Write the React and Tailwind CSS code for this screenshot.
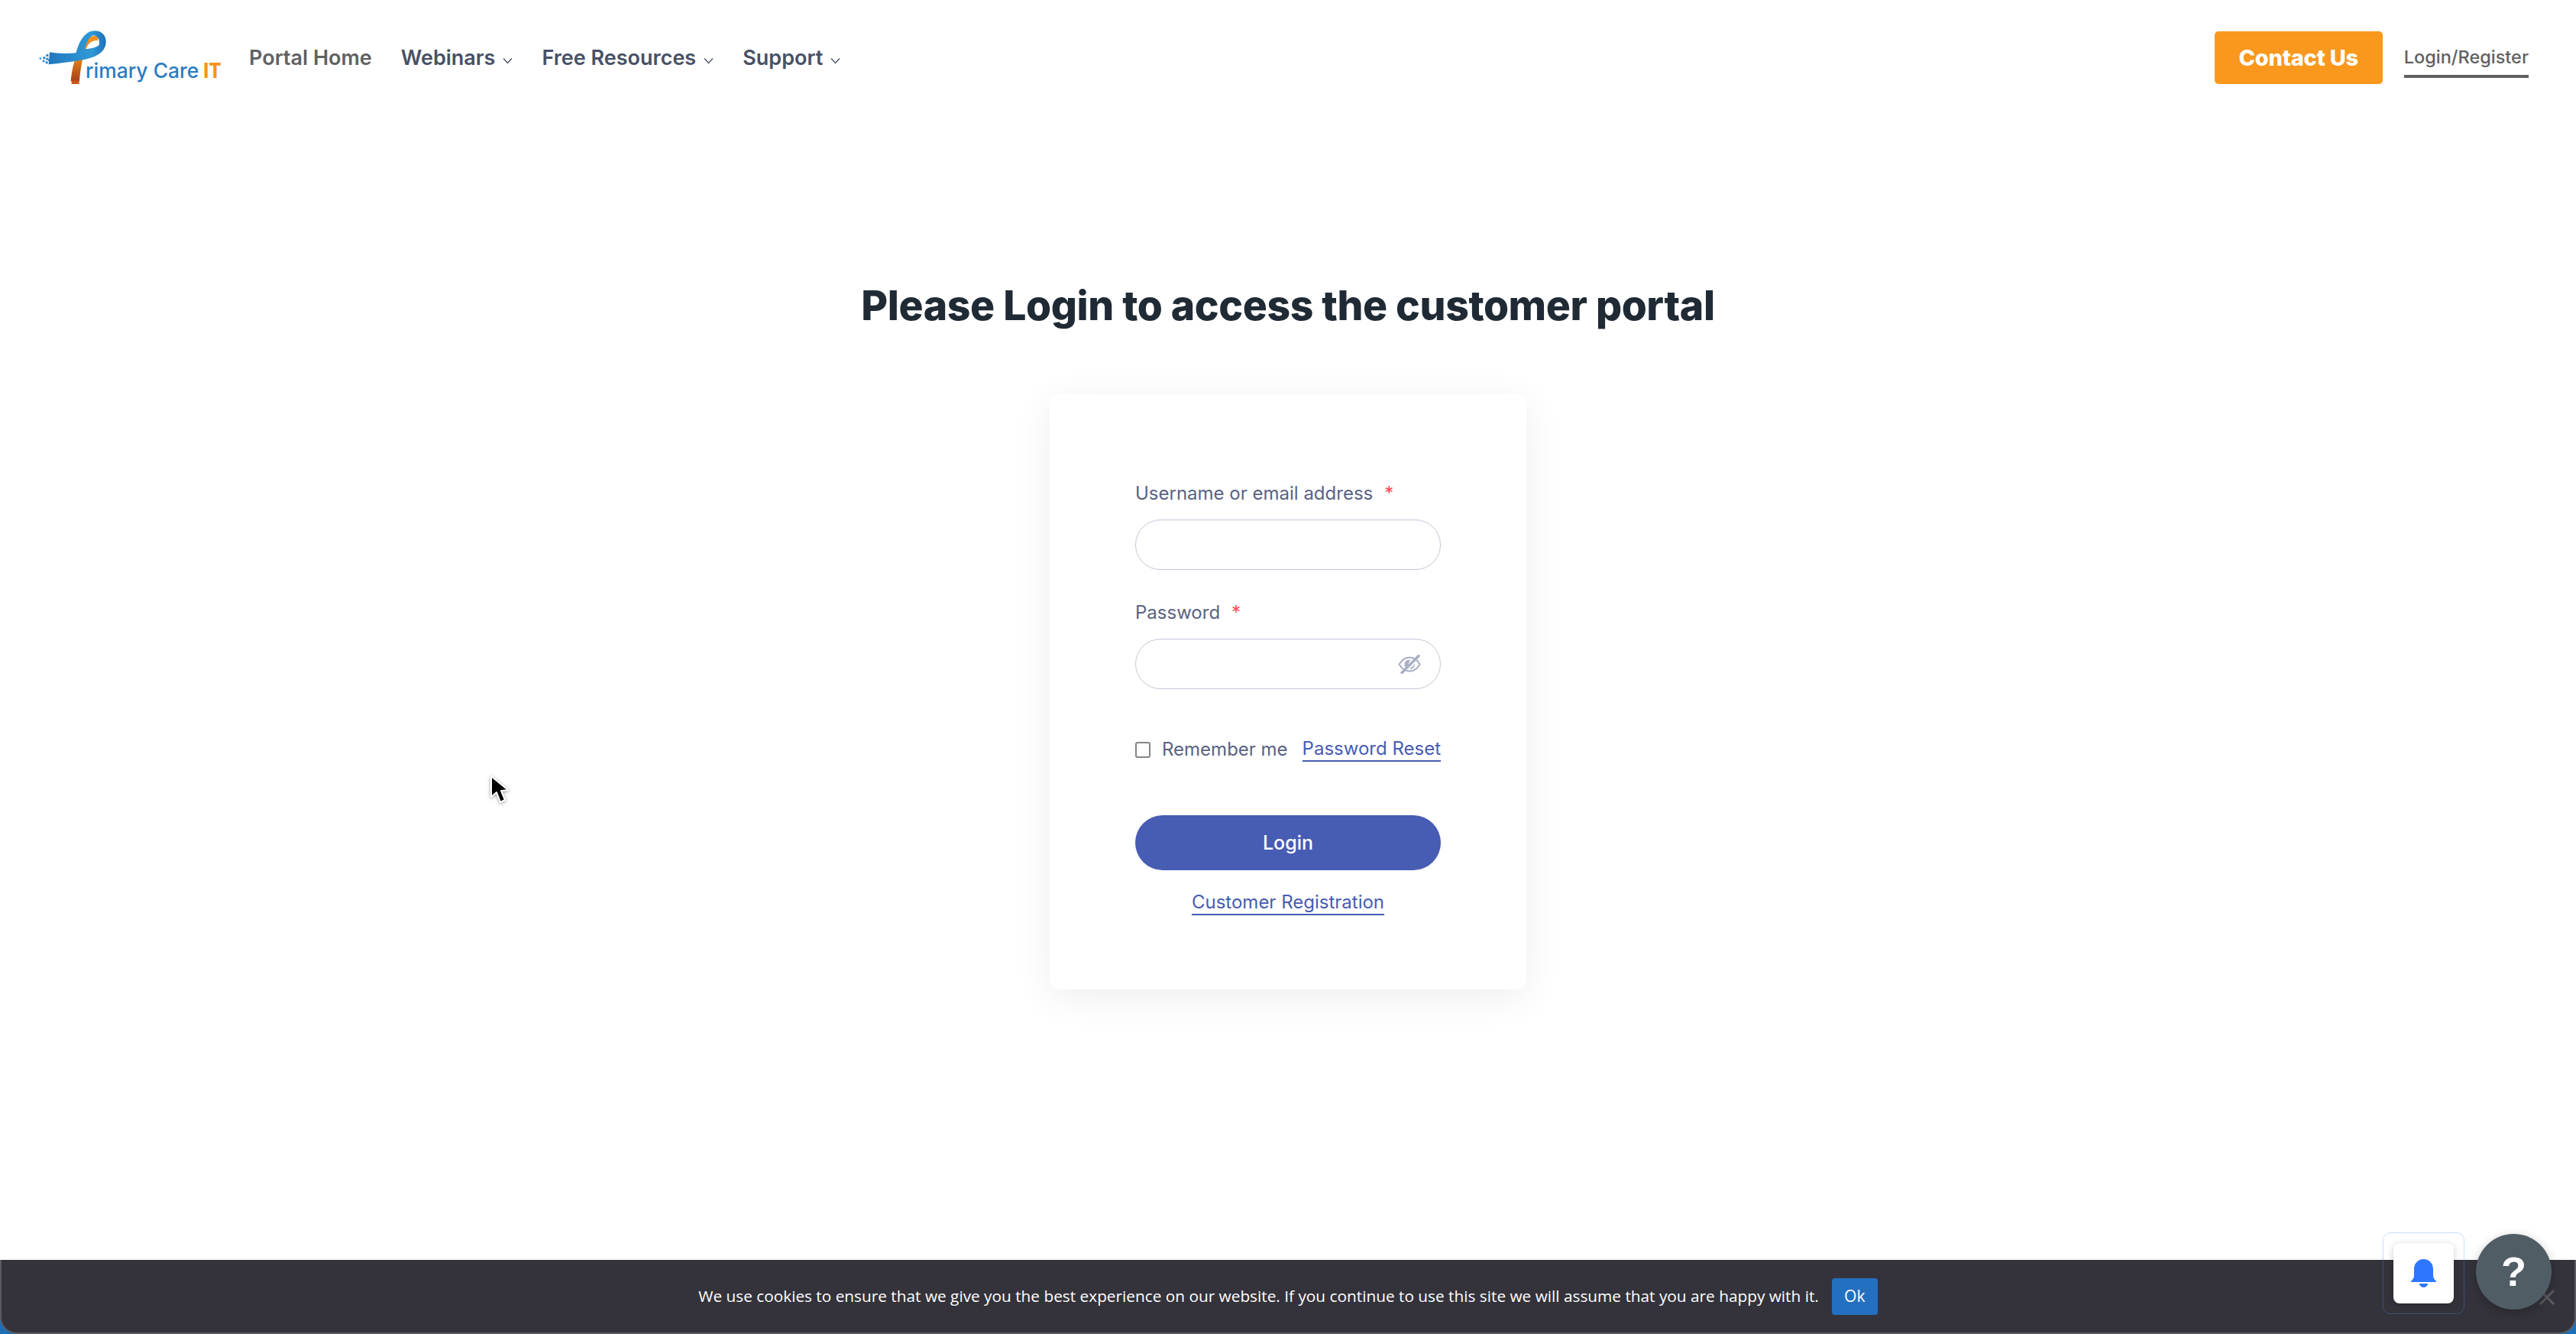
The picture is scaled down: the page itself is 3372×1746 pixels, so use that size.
const poppins = "font-['Inter','Liberation_Sans',sans-serif]";

function Logo() {
  return (
    <svg width="240" height="70" viewBox="62 65 720 210" className="shrink-0 overflow-visible">
      <defs>
        <linearGradient id="tail" x1="0" y1="0" x2="0" y2="1">
          <stop offset="0" stopColor="#f7941d" />
          <stop offset="0.55" stopColor="#dd7a1e" />
          <stop offset="1" stopColor="#a8401a" />
        </linearGradient>
        <linearGradient id="band" x1="0" y1="0" x2="1" y2="0">
          <stop offset="0" stopColor="#2277be" />
          <stop offset="0.75" stopColor="#2f9ad6" />
          <stop offset="1" stopColor="#1f6fb8" />
        </linearGradient>
      </defs>
      {/* ribbon tail */}
      <path d="M187 264 C190 215 205 160 232 118 C248 94 270 84 296 84 L292 104 C270 102 255 115 245 140 C232 175 224 220 221 264 Z" fill="url(#tail)" />
      <rect x="190" y="262" width="30" height="13" fill="#c8561a" />
      {/* loop and band */}
      <path d="M208 152 C220 105 245 66 280 66 C310 66 325 85 325 110 C325 140 300 168 235 180 C190 188 140 194 100 198 L104 150 C140 156 180 156 208 152 Z M242 138 C265 136 285 132 298 122 C302 105 294 88 280 84 C262 84 250 108 242 138 Z" fill="url(#band)" fillRule="evenodd" />
      {/* pixel dots */}
      <g fill="#2a86cb">
        <rect x="90" y="158" width="9" height="9" />
        <rect x="78" y="168" width="9" height="9" />
        <rect x="64" y="171" width="7" height="7" />
        <rect x="90" y="172" width="9" height="9" />
        <rect x="76" y="181" width="8" height="8" />
        <rect x="88" y="186" width="9" height="9" />
        <rect x="98" y="178" width="7" height="7" />
      </g>
      <text x="245" y="250" fontFamily="Inter, sans-serif" fontSize="80" fontWeight="500" textLength="445" lengthAdjust="spacingAndGlyphs" fill="#2a7cc2">rimary Care</text>
      <text x="708" y="250" fontFamily="Inter, sans-serif" fontSize="82" fontWeight="800" textLength="70" lengthAdjust="spacingAndGlyphs" fill="#f7941d">IT</text>
    </svg>
  );
}

function Caret() {
  return (
    <svg width="13" height="9" viewBox="0 0 13 9" fill="none" stroke="#475165" strokeWidth="1.3" className="mt-[6px] shrink-0">
      <path d="M1 1.5 L6.5 7.5 L12 1.5" />
    </svg>
  );
}

function NavItem({ label, caret }) {
  return (
    <a className={`flex items-center gap-[10px] pt-[2px] text-[27px] font-semibold ${caret ? "text-[#475165]" : "text-[#616161]"}`}>
      <span>{label}</span>
      {caret && <Caret />}
    </a>
  );
}

function SlashedEye() {
  return (
    <svg width="30" height="25" viewBox="0 0 30 25" fill="none" className="shrink-0">
      <path d="M1.500 12.500 C6 5.500 10.500 3.500 15 3.500 C20 3.500 25 6 28.500 12.500 C25 19 20 21.500 15 21.500 C10.500 21.500 6 19.500 1.500 12.500 Z" stroke="#a9aec4" strokeWidth="2" />
      <path d="M16 6.500 C11.500 6 8.500 9 8.500 12.500 C8.500 14.500 9.500 16.500 11 17.500 Z" fill="#a9aec4" />
      <path d="M21.500 12.500 C21 15 19 17.500 16 18" stroke="#a9aec4" strokeWidth="1.500" />
      <path d="M27 1.500 L5 23.500" stroke="#a9aec4" strokeWidth="3.500" strokeLinecap="round" />
    </svg>
  );
}

function Field({ label, eye, className }) {
  return (
    <div className={className}>
      <label className="flex h-[34px] items-center pt-[2px] text-[24px] text-[#5a6283]">
        {label}
        <span className="ml-[15px] text-[#ff4752]">*</span>
      </label>
      <div className="mt-[18px] flex h-[66px] items-center justify-end rounded-full border border-[#c3c6d8] pr-[25px]">
        {eye && <SlashedEye />}
      </div>
    </div>
  );
}

export default function App() {
  return (
    <div className={`relative flex h-[1746px] w-full flex-col overflow-hidden bg-white ${poppins}`}>
      {/* HEADER */}
      <header className="flex h-[150px] items-center justify-between pl-[51px] pr-[62px]">
        <div className="flex items-center">
          <Logo />
          <nav className="ml-[35px] flex items-center gap-[38px]">
            <NavItem label="Portal Home" />
            <NavItem label="Webinars" caret />
            <NavItem label="Free Resources" caret />
            <NavItem label="Support" caret />
          </nav>
        </div>
        <div className="flex items-center gap-[28px]">
          <a className="flex h-[69px] w-[220px] items-center justify-center rounded-[5px] bg-[#f9981d] pt-[2px] text-[29px] font-extrabold tracking-[-0.2px] text-white">
            Contact Us
          </a>
          <a className="mt-[9px] border-b-[4px] border-[#616161] pb-[5px] text-[23.5px] font-medium text-[#616161]">
            Login/Register
          </a>
        </div>
      </header>

      {/* MAIN */}
      <main className="flex flex-col items-center">
        <h1 className="mt-[214px] text-[53.5px] leading-[72px] font-extrabold tracking-[-0.4px] text-[#1f2a35]">
          Please Login to access the customer portal
        </h1>

        <form className="mt-[80px] flex h-[779px] w-[624px] flex-col rounded-[14px] bg-white px-[112px] pt-[112px] shadow-[0_10px_50px_rgba(0,0,0,0.07)]">
          <Field label="Username or email address" />
          <Field label="Password" eye className="mt-[38px]" />

          <div className="mt-[62px] flex h-[34px] items-center justify-between text-[24px]">
            <div className="flex items-center">
              <span className="h-[21px] w-[20px] rounded-[3px] border-2 border-[#858585]" />
              <span className="ml-[15px] text-[#5a6283]">Remember me</span>
            </div>
            <a className="border-b-2 border-[#475cb3] text-[#475cb3] leading-[30px]">Password Reset</a>
          </div>

          <button type="button" className="mt-[69px] h-[72px] rounded-full bg-[#475cb3] pt-[2px] text-[25px] font-medium text-white">
            Login
          </button>

          <a className="mt-[27px] self-center border-b-2 border-[#475cb3] text-[24px] leading-[30px] text-[#475cb3]">
            Customer Registration
          </a>
        </form>
      </main>

      {/* COOKIE BAR */}
      <div className="absolute inset-x-0 bottom-0 h-[97px] bg-[#1f6fb8]">
        <div className="flex h-full items-center justify-center gap-[17px] rounded-b-[22px] border-x-2 border-b-2 border-[#5b5a60] bg-[#34333b] font-['Open_Sans',sans-serif]">
          <p className="text-[20.8px] text-white">
            We use cookies to ensure that we give you the best experience on our website. If you continue to use this site we will assume that you are happy with it.
          </p>
          <button type="button" className="h-[48px] w-[60px] rounded-[4px] bg-[#2470c0] text-[21px] text-white">
            Ok
          </button>
        </div>
      </div>

      {/* close x under the help button */}
      <svg width="20" height="20" viewBox="0 0 20 20" className="absolute left-[3324px] top-[1688px]" stroke="#5b5b61" strokeWidth="3">
        <path d="M1 1 L19 19 M19 1 L1 19" />
      </svg>

      {/* notification bell */}
      <div className="absolute left-[3119px] top-[1613px] flex h-[107px] w-[107px] items-center justify-center rounded-[10px] border border-[#4d8dff]/30">
        <div className="flex h-[79px] w-[79px] items-center justify-center rounded-[8px] bg-white shadow-[0_2px_10px_rgba(0,0,0,0.2)]">
          <svg width="33" height="37" viewBox="0 0 33 37" fill="#2f76ff">
            <path d="M16.5 0 C24 0 29 6 29 13 L29 21 C29 25 31 27 33 29 L33 30 L0 30 L0 29 C2 27 4 25 4 21 L4 13 C4 6 9 0 16.5 0 Z" />
            <path d="M10.5 32 L22.5 32 C21.5 35 19 37 16.5 37 C14 37 11.500 35 10.500 32 Z" />
          </svg>
        </div>
      </div>

      {/* help button */}
      <div className="absolute left-[3241px] top-[1615px] flex h-[99px] w-[99px] items-center justify-center rounded-full bg-[#505d64] font-['Liberation_Sans',sans-serif] text-[54px] font-bold text-white shadow-[0_4px_14px_rgba(0,0,0,0.25)]">
        ?
      </div>

      {/* mouse cursor */}
      <svg width="26" height="38" viewBox="0 0 26 38" className="absolute left-[641px] top-[1015px] drop-shadow-[0_1px_2px_rgba(0,0,0,0.4)]">
        <path d="M2 1 L2 28 L9 22 L14 35 L20 32 L15 20 L24 19 Z" fill="#000" stroke="#fff" strokeWidth="2" strokeLinejoin="round" />
      </svg>
    </div>
  );
}
